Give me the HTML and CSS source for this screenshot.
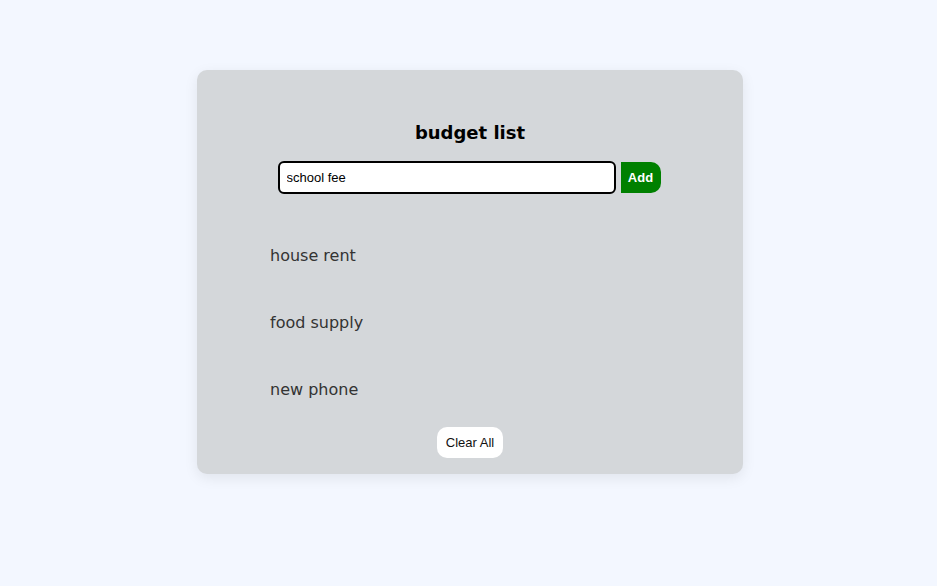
FILE: index.html
```html
<!DOCTYPE html>
<html>
<head>
<meta charset="utf-8">
<link rel="stylesheet" href="styles.css">
</head>
<body>
<div class="card">
  <h2 class="title">budget list</h2>
  <div class="form-row">
    <input class="item-input" type="text" value="school fee">
    <button class="add-btn">Add</button>
  </div>
  <ul class="items">
    <li class="item">house rent</li>
    <li class="item">food supply</li>
    <li class="item">new phone</li>
  </ul>
  <div class="footer">
    <button class="clear-btn">Clear All</button>
  </div>
</div>
</body>
</html>
```
FILE: styles.css
```css
html, body {
  margin: 0;
  padding: 0;
}
body {
  background: #f3f7ff;
  width: 937px;
  height: 586px;
  padding-top: 70px;
  box-sizing: border-box;
  font-family: "DejaVu Sans", Verdana, sans-serif;
}
.card {
  width: 546px;
  margin-left: 197px;
  background: #d4d7da;
  border-radius: 10px;
  box-shadow: 0 4px 14px rgba(0, 0, 0, 0.08);
  padding: 51px 0 16px;
  box-sizing: border-box;
  display: flex;
  flex-direction: column;
}
.title {
  margin: 0;
  text-align: center;
  font-size: 18px;
  line-height: 24px;
  font-weight: bold;
  color: #000;
}
.form-row {
  margin-top: 16px;
  display: flex;
  justify-content: center;
  align-items: center;
  gap: 5px;
  padding-right: 2px;
}
.item-input {
  width: 338px;
  height: 33px;
  box-sizing: border-box;
  border: 2px solid #000;
  border-radius: 6px;
  padding: 0 7px;
  font-family: "Liberation Sans", Arial, sans-serif;
  font-size: 13px;
  color: #000;
  background: #fff;
  outline: none;
}
.add-btn {
  width: 40px;
  height: 31px;
  border: none;
  background: #008000;
  color: #fff;
  font-family: "Liberation Sans", Arial, sans-serif;
  font-weight: bold;
  font-size: 13px;
  border-radius: 0 10px 10px 0;
  padding: 0;
}
.items {
  list-style: none;
  margin: 52px 0 0;
  padding: 0 0 0 73px;
  display: flex;
  flex-direction: column;
  gap: 47px;
}
.item {
  font-size: 16px;
  line-height: 20px;
  color: #333;
}
.footer {
  margin-top: 27px;
  display: flex;
  justify-content: center;
}
.clear-btn {
  width: 66px;
  height: 31px;
  border: none;
  background: #fff;
  border-radius: 10px;
  font-family: "Liberation Sans", Arial, sans-serif;
  font-size: 13px;
  color: #111;
  padding: 0;
}
```
